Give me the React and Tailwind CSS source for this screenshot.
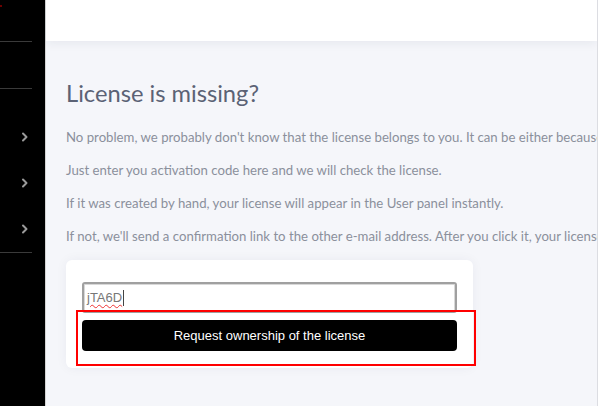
import React from "react";

function Chevron() {
  return (
    <svg width="8" height="10" viewBox="0 0 8 10" fill="none">
      <path d="M2 1.5 L5.5 5 L2 8.5" stroke="#9a9a9a" strokeWidth="2" strokeLinecap="round" strokeLinejoin="round" />
    </svg>
  );
}

const paragraphs = [
  "No problem, we probably don't know that the license belongs to you. It can be either because it was created by hand, or it was bought with another e-mail address.",
  "Just enter you activation code here and we will check the license.",
  "If it was created by hand, your license will appear in the User panel instantly.",
  "If not, we'll send a confirmation link to the other e-mail address. After you click it, your license will appear in the User panel.",
];

export default function App() {
  return (
    <div className="flex h-[406px] w-[599px] overflow-hidden bg-[#f5f6fa]" style={{ fontFamily: "Lato, 'Open Sans', sans-serif" }}>
      <aside className="flex w-[46px] shrink-0 flex-col border-r border-[#d4d4d4] bg-black">
        <div className="relative h-[41px]">
          <span className="absolute left-0 top-[5px] h-[2px] w-[2px] bg-[#6b0000]" />
        </div>
        <div className="h-px w-[32px] bg-[#3a3a3a]" />
        <div className="h-[46px]" />
        <div className="h-px w-[32px] bg-[#3a3a3a]" />
        <div className="h-[25px]" />
        {[0, 1, 2].map((i) => (
          <div key={i} className="flex h-[46px] items-center pl-[21px]">
            <Chevron />
          </div>
        ))}
        <div className="h-px w-[32px] bg-[#3a3a3a]" />
      </aside>

      <main className="flex min-w-0 flex-1 flex-col">
        <header className="h-[41px] shrink-0 bg-white shadow-[0_2px_10px_rgba(30,40,70,0.07)]" />
        <div className="min-w-0 flex-1 overflow-hidden pl-[20px] pt-[36px]">
          <h1 className="text-[23.7px] leading-[32px] text-[#5b6275]">License is missing?</h1>
          <div className="mt-[18px] flex flex-col gap-[13px] text-[13.2px] leading-[20px] text-[#8b909c]">
            {paragraphs.map((p) => (
              <p key={p} className="whitespace-nowrap">{p}</p>
            ))}
          </div>

          <div className="relative mt-[14px] w-[407px] rounded-[6px] bg-white px-[16px] pb-[17px] pt-[22px] shadow-[0_0_12px_rgba(30,40,70,0.05)]">
            <div className="flex h-[31px] items-center rounded-[3px] border-2 border-[#a0a0a0] px-[3px] shadow-[inset_0_0_0_1px_#d8d8d8]" style={{ fontFamily: "'Liberation Sans', Arial, sans-serif" }}>
              <span className="text-[13px] text-[#777] underline decoration-wavy decoration-[#e33] decoration-1 underline-offset-2">jTA6D</span>
              <span className="ml-px h-[16px] w-px bg-[#444]" />
            </div>
            <button className="mt-[7px] flex h-[31px] w-full items-center justify-center rounded-[4px] bg-black text-[13px] text-white" style={{ fontFamily: "'Liberation Sans', Arial, sans-serif" }}>
              Request ownership of the license
            </button>
            <div className="pointer-events-none absolute left-[10px] top-[50px] h-[56px] w-[400px] border-2 border-[#f00]" />
          </div>
        </div>
      </main>
      <div className="w-[2px] shrink-0 border-l border-[#dcdde2] bg-white" />
    </div>
  );
}
